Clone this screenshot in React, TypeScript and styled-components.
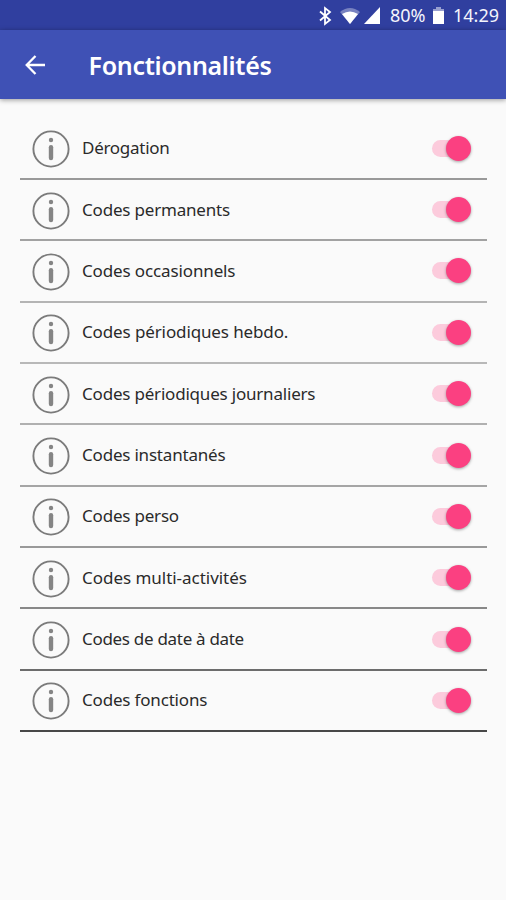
import React from 'react';
import styled, { createGlobalStyle } from 'styled-components';

const Global = createGlobalStyle`
  * { box-sizing: border-box; }
  body { margin: 0; background: #fafafa; font-family: 'Noto Sans', 'Open Sans', sans-serif; }
`;
const Screen = styled.div`
  width: 506px; height: 900px; overflow: hidden; background: #fafafa;
  display: flex; flex-direction: column;
`;
const StatusBar = styled.div`
  height: 30px; flex: none; background: #303f9f; color: #f4f5fc;
  display: flex; align-items: center; justify-content: flex-end;
  padding: 0 7px 0 0; font-size: 18px; line-height: 30px;
  svg { display: block; flex: none; }
`;
const StatusText = styled.span<{ $w: number }>`
  width: ${p => p.$w}px; white-space: nowrap;
`;
const AppBar = styled.header`
  height: 69px; flex: none; background: #3f51b5; color: #fff;
  display: flex; align-items: center; padding: 0 0 0 25px;
  box-shadow: 0 1px 5px rgba(0, 0, 0, 0.4);
`;
const Title = styled.h1`
  margin: 1px 0 0 42.6px; font-size: 25px; line-height: 34px; font-weight: 600;
  letter-spacing: -0.33px; white-space: nowrap;
`;
const List = styled.ul`
  list-style: none; margin: 0; padding: 19.55px 19px 0 20px;
`;
const Row = styled.li<{ $line: string }>`
  height: 61.37px; display: flex; align-items: center;
  padding: 0 16px 0 12px; border-bottom: 2px solid ${p => p.$line};
`;
const InfoGlyph = styled.svg`
  display: block; flex: none; width: 38px; height: 38px; margin-top: 2px;
`;
const Label = styled.span<{ $track: number }>`
  flex: 1; margin-left: 12px; font-size: 17px; line-height: 24px; color: #2a2a2a;
  white-space: nowrap; letter-spacing: ${p => p.$track}px;
`;
const Switch = styled.span`
  width: 39px; height: 26px; display: flex; align-items: center;
`;
const Track = styled.span`
  width: 34px; height: 17px; border-radius: 9px; background: #fccbdc; flex: none;
`;
const Thumb = styled.span`
  width: 25px; height: 25px; margin-left: -20px; flex: none; border-radius: 50%;
  background: #fb4081; box-shadow: 0 1px 3px rgba(0, 0, 0, 0.35);
`;

const InfoIcon = () => (
  <InfoGlyph viewBox="0 0 38 38">
    <circle cx="19" cy="19" r="17.6" fill="none" stroke="#7b7b7b" strokeWidth="1.9" />
    <circle cx="19" cy="10" r="2.2" fill="#858585" />
    <path d="M19 17.2V28" stroke="#858585" strokeWidth="4.4" strokeLinecap="round" />
  </InfoGlyph>
);

const rows = [
  { label: 'Dérogation', line: '#999', track: -0.28 },
  { label: 'Codes permanents', line: '#a2a2a2', track: -0.19 },
  { label: 'Codes occasionnels', line: '#b4b4b4', track: -0.13 },
  { label: 'Codes périodiques hebdo.', line: '#b8b8b8', track: -0.12 },
  { label: 'Codes périodiques journaliers', line: '#b0b0b0', track: -0.2 },
  { label: 'Codes instantanés', line: '#a5a5a5', track: -0.2 },
  { label: 'Codes perso', line: '#999', track: -0.2 },
  { label: 'Codes multi-activités', line: '#888', track: -0.03 },
  { label: 'Codes de date à date', line: '#6c6c6c', track: -0.3 },
  { label: 'Codes fonctions', line: '#484848', track: -0.18 },
];

export default function App() {
  return (
    <Screen>
      <Global />
      <StatusBar>
        <svg width="77" height="30" viewBox="313 0 77 30" fill="#fff">
          <path d="M320 11.5L330 20L325 24V8L330 12L320 20.5" fill="none" stroke="#fff" strokeWidth="1.8" />
          <path d="M340 12Q350 4 360 12L350 24Z" opacity=".35" />
          <path d="M342 14Q350 9 358 14L350 24Z" />
          <path d="M380 7V24H364Z" />
        </svg>
        <StatusText $w={42}>80%</StatusText>
        <svg width="21" height="30" viewBox="432 0 21 30" fill="#fff">
          <path d="M436 7H441V9H444V11H433V9H436Z" opacity=".5" />
          <path d="M433 11H444V24H433Z" />
        </svg>
        <StatusText $w={46}>14:29</StatusText>
      </StatusBar>
      <AppBar>
        <svg width="21" height="20" viewBox="0 0 21 20" fill="none" stroke="#fff" strokeWidth="2.3">
          <path d="M20 10H2M10.5 1L1.7 10L10.5 19" />
        </svg>
        <Title>Fonctionnalités</Title>
      </AppBar>
      <List>
        {rows.map(r => (
          <Row key={r.label} $line={r.line}>
            <InfoIcon />
            <Label $track={r.track}>{r.label}</Label>
            <Switch><Track /><Thumb /></Switch>
          </Row>
        ))}
      </List>
    </Screen>
  );
}
